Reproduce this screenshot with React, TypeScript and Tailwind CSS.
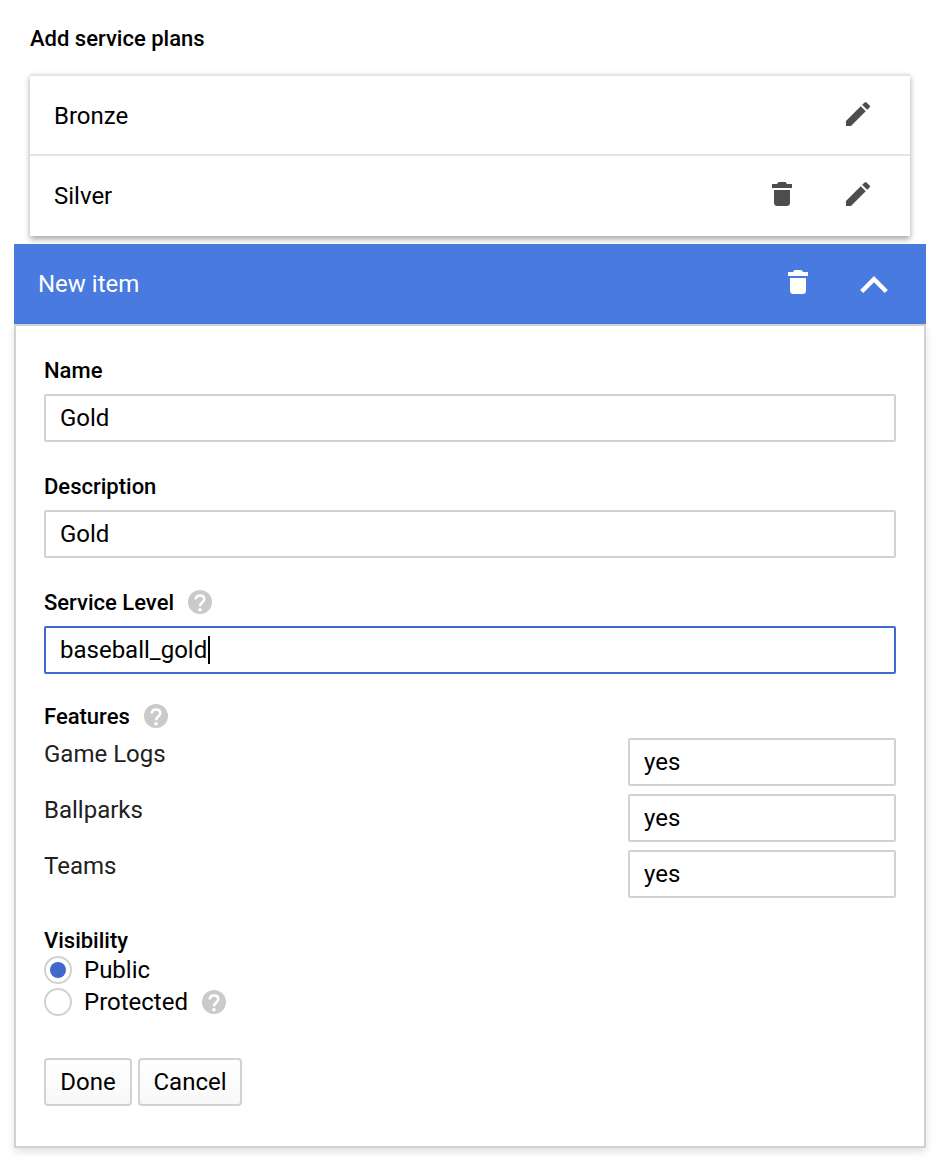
import React from "react";

function Pencil() {
  return (
    <svg width="32" height="32" viewBox="0 0 24 24" fill="#4d4d4d" className="block">
      <path d="M3 17.25V21h3.75L17.81 9.94l-3.75-3.75L3 17.25zM20.71 7.04a1 1 0 0 0 0-1.41l-2.34-2.34a1 1 0 0 0-1.41 0l-1.83 1.83 3.75 3.75 1.83-1.83z" />
    </svg>
  );
}

function Trash() {
  return (
    <svg width="20" height="24" viewBox="0 0 20 24" fill="currentColor" className="block">
      <path d="M0 2h5l1.500-2h7L15 2h5v4H0z" />
      <path d="M2 8h16v12.500a3.500 3.500 0 0 1-3.500 3.500h-9A3.500 3.500 0 0 1 2 20.500z" />
    </svg>
  );
}

function Chevron() {
  return (
    <svg width="28" height="18" viewBox="0 0 28 18" fill="none" stroke="#fff" strokeWidth="4.4" className="block">
      <path d="M1.700 15.500L14 3.200l12.300 12.300" />
    </svg>
  );
}

function Help() {
  return (
    <svg width="24" height="24" viewBox="0 0 24 24" fill="none" className="block">
      <circle cx="12" cy="12" r="12" fill="#cacaca" />
      <path d="M7.700 9.400C7.700 6.900 9.500 5.400 12 5.400s4.300 1.500 4.300 3.800c0 3.100-4.300 3.500-4.300 7" stroke="#fff" strokeWidth="2.500" />
      <circle cx="12" cy="19.700" r="1.800" fill="#fff" />
    </svg>
  );
}

function Label({ text, help }: { text: string; help?: boolean }) {
  return (
    <div className="flex h-6 items-center gap-3.5 text-[22px] leading-6 font-medium">
      <span className="pt-0.5">{text}</span>
      {help && <Help />}
    </div>
  );
}

function Field({ value, focused }: { value: string; focused?: boolean }) {
  return (
    <div
      className={`flex h-12 items-center rounded-[2px] border-2 bg-white px-3.5 ${
        focused ? "border-[#3f69cd]" : "border-[#d2d2d2]"
      }`}
    >
      <span>{value}</span>
      {focused && <span className="ml-px h-7 w-0.5 bg-black" />}
    </div>
  );
}

function Radio({ label, checked, help }: { label: string; checked?: boolean; help?: boolean }) {
  return (
    <div className="flex h-8 items-center">
      <span className="flex size-7 items-center justify-center rounded-full border-2 border-[#d2d2d2] bg-white">
        {checked && <span className="size-4 rounded-full bg-[#3f69cd]" />}
      </span>
      <span className="ml-3">{label}</span>
      {help && (
        <span className="ml-3.5">
          <Help />
        </span>
      )}
    </div>
  );
}

const features = ["Game Logs", "Ballparks", "Teams"];

export default function App() {
  return (
    <div className="h-[1174px] w-[946px] overflow-hidden bg-white pt-[26px] pr-5 pl-3.5 font-['Roboto',sans-serif] text-2xl leading-7 text-black">
      <div className="pl-4">
        <Label text="Add service plans" />
      </div>
      <div className="mx-4 mt-6 text-[#4d4d4d] shadow-[0_3px_6px_rgba(0,0,0,0.36)]">
        <div className="flex h-20 items-center border-t-2 border-[#e4e4e4] bg-white pr-9 pl-6">
          <span className="flex-1 pt-0.5 text-black">Bronze</span>
          <span className="pb-0.5">
            <Pencil />
          </span>
        </div>
        <div className="flex h-[82px] items-center border-t-2 border-[#e4e4e4] bg-white pr-9 pb-0.5 pl-6">
          <span className="flex-1 pt-0.5 text-black">Silver</span>
          <span className="pb-0.5">
            <Trash />
          </span>
          <span className="ml-[50px] pb-0.5">
            <Pencil />
          </span>
        </div>
      </div>
      <div className="relative mt-2">
        <div className="relative flex h-20 items-center bg-[#487adf] pr-[38px] pl-6 text-white">
          <span className="flex-1">New item</span>
          <span className="pb-1">
            <Trash />
          </span>
          <span className="ml-[52px] pt-0.5">
            <Chevron />
          </span>
        </div>
        <div className="h-[824px] border-2 border-[#d2d2d2] bg-white px-7 pt-8 shadow-[0_4px_8px_rgba(0,0,0,0.12)]">
          <Label text="Name" />
          <div className="mt-3">
            <Field value="Gold" />
          </div>
          <div className="mt-8">
            <Label text="Description" />
          </div>
          <div className="mt-3">
            <Field value="Gold" />
          </div>
          <div className="mt-8">
            <Label text="Service Level" help />
          </div>
          <div className="mt-3">
            <Field value="baseball_gold" focused />
          </div>
          <div className="mt-[30px]">
            <Label text="Features" help />
          </div>
          <div className="mt-2.5 flex flex-col gap-2">
            {features.map((name) => (
              <div key={name} className="flex justify-between">
                <span className="mt-0.5 text-[#212121]">{name}</span>
                <div className="w-[268px]">
                  <Field value="yes" />
                </div>
              </div>
            ))}
          </div>
          <div className="mt-[30px]">
            <Label text="Visibility" />
          </div>
          <div className="mt-0.5">
            <Radio label="Public" checked />
            <Radio label="Protected" help />
          </div>
          <div className="mt-10 flex gap-1.5">
            <button className="h-12 w-[88px] rounded border-2 border-[#d2d2d2] bg-linear-to-b from-white to-[#f8f8f8]">
              Done
            </button>
            <button className="h-12 w-[104px] rounded border-2 border-[#d2d2d2] bg-linear-to-b from-white to-[#f8f8f8]">
              Cancel
            </button>
          </div>
        </div>
      </div>
    </div>
  );
}
